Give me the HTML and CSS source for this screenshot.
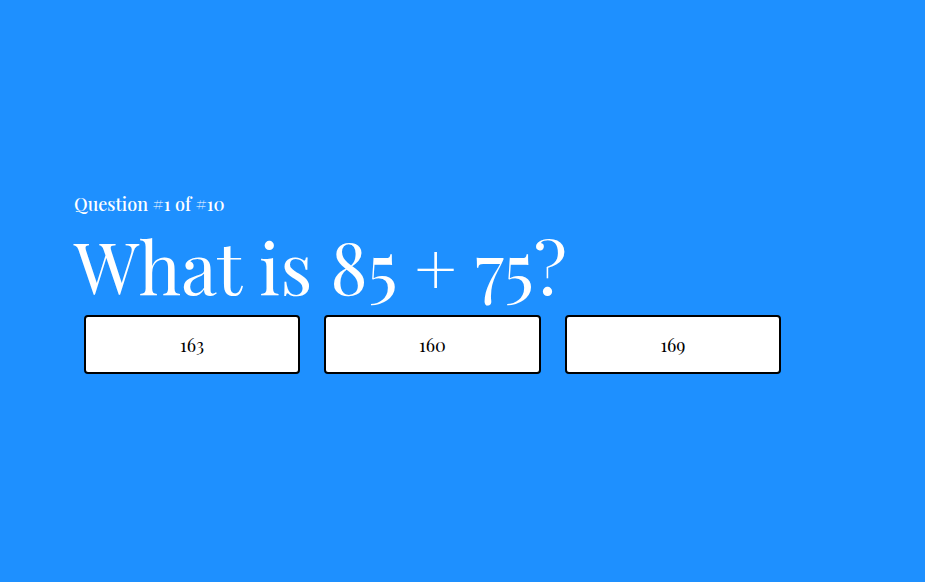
FILE: index.html
```html
<!DOCTYPE html>
<html lang="en">
<head>
<meta charset="utf-8">
<meta name="viewport" content="width=device-width, initial-scale=1">
<title>Math Quiz</title>
<link rel="stylesheet" href="styles.css">
</head>
<body>
<main class="quiz">
  <p class="progress">Question #1 of #10</p>
  <h1 class="question">What is 85 + 75?</h1>
  <div class="answers">
    <button class="answer" type="button">163</button>
    <button class="answer" type="button">160</button>
    <button class="answer" type="button">169</button>
  </div>
</main>
</body>
</html>
```
FILE: styles.css
```css
* {
  box-sizing: border-box;
}

body {
  margin: 0;
  min-height: 100vh;
  display: flex;
  align-items: center;
  background: #1e90ff;
  color: #fff;
  font-family: "Playfair Display", "Liberation Serif", serif;
}

.quiz {
  width: 84%;
  margin: 0 auto;
  padding-bottom: 16px;
}

.progress {
  margin: 0;
  font-size: 18px;
  font-weight: 500;
  line-height: 24px;
}

.question {
  margin: 0;
  font-size: 72px;
  font-weight: 400;
  line-height: 99px;
}

.answers {
  display: flex;
  justify-content: space-between;
  padding: 0 70px 0 10px;
}

.answer {
  width: 31%;
  padding: 17px 8px 15px;
  border: 2px solid #000;
  border-radius: 4px;
  background: #fff;
  color: #000;
  font-family: inherit;
  font-size: 18px;
  line-height: 23px;
}
```
